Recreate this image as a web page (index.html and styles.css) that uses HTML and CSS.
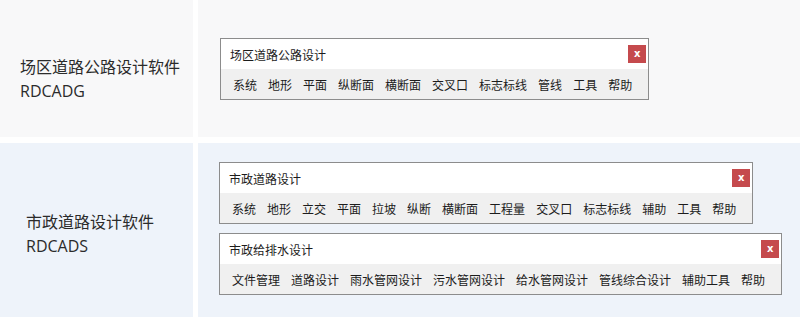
FILE: index.html
```html
<!DOCTYPE html>
<html lang="zh-CN">
<head>
<meta charset="utf-8">
<title>软件</title>
<link rel="stylesheet" href="styles.css">
</head>
<body>
<div class="table">
  <div class="label label-a">
    <div>场区道路公路设计软件</div>
    <div>RDCADG</div>
  </div>
  <div class="cell cell-a">
    <div class="win">
      <div class="win-title"><span>场区道路公路设计</span><span class="close">x</span></div>
      <div class="menu">
        <span>系统</span><span>地形</span><span>平面</span><span>纵断面</span><span>横断面</span><span>交叉口</span><span>标志标线</span><span>管线</span><span>工具</span><span>帮助</span>
      </div>
    </div>
  </div>
  <div class="label label-b">
    <div>市政道路设计软件</div>
    <div>RDCADS</div>
  </div>
  <div class="cell cell-b">
    <div class="win">
      <div class="win-title"><span>市政道路设计</span><span class="close">x</span></div>
      <div class="menu">
        <span>系统</span><span>地形</span><span>立交</span><span>平面</span><span>拉坡</span><span>纵断</span><span>横断面</span><span>工程量</span><span>交叉口</span><span>标志标线</span><span>辅助</span><span>工具</span><span>帮助</span>
      </div>
    </div>
    <div class="win">
      <div class="win-title"><span>市政给排水设计</span><span class="close">x</span></div>
      <div class="menu">
        <span>文件管理</span><span>道路设计</span><span>雨水管网设计</span><span>污水管网设计</span><span>给水管网设计</span><span>管线综合设计</span><span>辅助工具</span><span>帮助</span>
      </div>
    </div>
  </div>
</div>
</body>
</html>
```

FILE: styles.css
```css
html, body {
  margin: 0;
  padding: 0;
  background: #ffffff;
}
body {
  width: 800px;
  height: 320px;
  overflow: hidden;
  font-family: "Noto Sans CJK SC", sans-serif;
}
.table {
  display: grid;
  grid-template-columns: 193px 1fr;
  grid-template-rows: 137px 174px;
  column-gap: 5px;
  row-gap: 6px;
}
.label {
  font-family: "Open Sans", "Noto Sans CJK SC", sans-serif;
  font-size: 16px;
  line-height: 24px;
  color: #2b2b2b;
}
.label-a {
  background: #f8f8f9;
  padding: 55px 0 0 20px;
}
.label-b {
  background: #eef3fa;
  padding: 67px 0 0 26px;
}
.cell {
  display: flex;
  flex-direction: column;
  align-items: flex-start;
}
.cell-a {
  background: #f8f8f9;
  padding: 38px 0 0 22px;
}
.cell-b {
  background: #eef3fa;
  padding: 19px 0 0 21px;
  gap: 9px;
}
.win {
  border: 1px solid #8c8c8c;
  display: flex;
  flex-direction: column;
  font-size: 12px;
  color: #1c1c1c;
}
.win-title {
  height: 30px;
  background: #ffffff;
  display: flex;
  align-items: center;
  justify-content: space-between;
  padding: 0 2px 0 9px;
}
.close {
  width: 18px;
  height: 18px;
  background: #c54a4d;
  color: #ffffff;
  font-family: "DejaVu Sans", sans-serif;
  font-weight: bold;
  font-size: 10px;
  line-height: 17px;
  text-align: center;
}
.menu {
  height: 30px;
  background: #f0f0f0;
  display: flex;
  align-items: center;
  gap: 11px;
  padding: 1px 16px 0 12px;
  box-sizing: border-box;
  white-space: nowrap;
}
```
